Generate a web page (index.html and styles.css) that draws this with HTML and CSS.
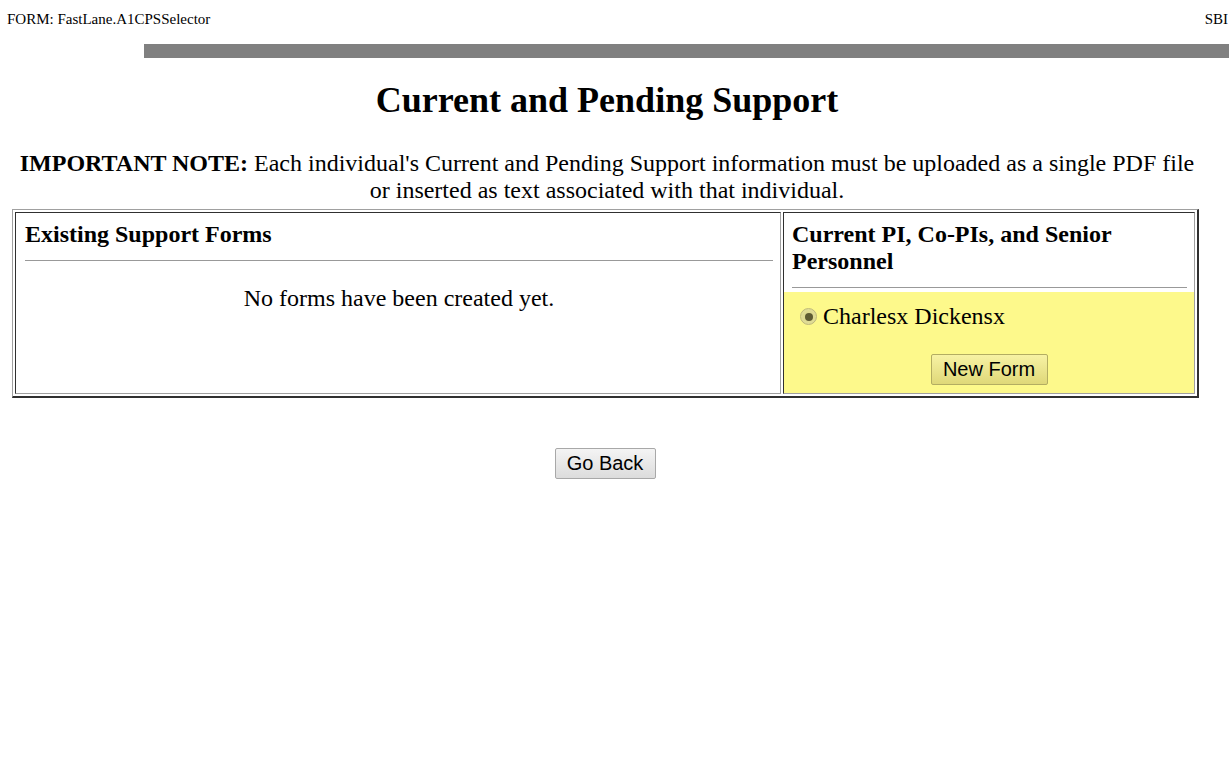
FILE: index.html
```html
<!DOCTYPE html>
<html>
<head>
<meta charset="utf-8">
<title>Current and Pending Support</title>
<link rel="stylesheet" href="styles.css">
</head>
<body>
<div class="topline">
  <span class="form-id">FORM: FastLane.A1CPSSelector</span>
  <span class="sbi">SBI</span>
</div>
<div class="graybar"></div>
<div class="page">
  <h1 class="title">Current and Pending Support</h1>
  <p class="note"><b>IMPORTANT NOTE:</b> Each individual's Current and Pending Support information must be uploaded as a single PDF file or inserted as text associated with that individual.</p>
  <table class="main">
    <tr>
      <td class="cell left">
        <div class="cell-head">Existing Support Forms</div>
        <hr class="rule">
        <div class="empty">No forms have been created yet.</div>
      </td>
      <td class="cell right">
        <div class="cell-head pad">Current PI, Co-PIs, and Senior Personnel</div>
        <hr class="rule pad-rule">
        <div class="yellow">
          <label class="person"><span class="radio"><span class="dot"></span></span>Charlesx Dickensx</label>
          <div class="btnrow"><button class="btn btn-yellow">New Form</button></div>
        </div>
      </td>
    </tr>
  </table>
  <div class="back"><button class="btn btn-gray">Go Back</button></div>
</div>
</body>
</html>
```
FILE: styles.css
```css
html, body {
  margin: 0;
  padding: 0;
  background: #fff;
  overflow: hidden;
}
body {
  font-family: "Liberation Serif", "Times New Roman", serif;
  color: #000;
  width: 1229px;
}
.topline {
  display: flex;
  justify-content: space-between;
  padding: 10px 1px 0 7px;
  height: 20px;
  font-size: 15px;
  line-height: 18px;
  box-sizing: border-box;
}
.graybar {
  margin: 24px 0 0 144px;
  height: 14px;
  background: #808080;
}
.page {
  width: 1198px;
  padding: 0 8px;
}
.title {
  text-align: center;
  font-size: 36px;
  line-height: 40px;
  margin: 22px 0 0;
  font-weight: bold;
}
.note {
  text-align: center;
  font-size: 24px;
  line-height: 27px;
  margin: 30px 0 0;
}
.main {
  margin: 5px 0 0 4px;
  width: 1187px;
  border-collapse: separate;
  border-spacing: 2px;
  border-style: solid;
  border-width: 1px 2px 2px 1px;
  border-color: #a0a0a0 #303030 #303030 #a0a0a0;
}
.cell {
  box-sizing: border-box;
  vertical-align: top;
  border: 1px solid;
  border-color: #303030 #a0a0a0 #a0a0a0 #303030;
}
.left {
  width: 766px;
  padding: 8px 7px 8px 9px;
}
.right {
  padding: 0;
}
.cell-head {
  font-size: 24px;
  line-height: 27px;
  font-weight: bold;
}
.pad {
  padding: 8px 8px 0 8px;
}
.rule {
  border: 0;
  border-top: 1px solid #999;
  height: 0;
  margin: 12px 0 0;
}
.pad-rule {
  margin: 12px 7px 0 8px;
}
.empty {
  text-align: center;
  font-size: 24px;
  line-height: 27px;
  margin-top: 24px;
}
.yellow {
  margin-top: 4px;
  background: #fdf98b;
  padding: 11px 8px 8px 8px;
}
.person {
  display: flex;
  align-items: center;
  font-size: 24px;
  line-height: 27px;
  padding-left: 8px;
}
.radio {
  width: 17px;
  height: 17px;
  border-radius: 50%;
  background: radial-gradient(circle, #d8d48a 0%, #e6e29c 100%);
  border: 1px solid #bdb87a;
  box-sizing: border-box;
  display: flex;
  align-items: center;
  justify-content: center;
  margin-right: 6px;
}
.dot {
  width: 8px;
  height: 8px;
  border-radius: 50%;
  background: #5e5b33;
}
.btnrow {
  text-align: center;
  margin-top: 24px;
  line-height: 0;
}
.btn {
  font-family: "Liberation Sans", Arial, sans-serif;
  font-size: 20px;
  height: 31px;
  padding: 0 10px;
  border-radius: 2px;
  color: #000;
  cursor: pointer;
  vertical-align: top;
}
.btn-yellow {
  width: 117px;
  border: 1px solid #b3ad62;
  background: linear-gradient(#f7f2a4, #dfd878);
}
.btn-gray {
  width: 101px;
  border: 1px solid #a8a8a8;
  background: linear-gradient(#f4f4f4, #dcdcdc);
}
.back {
  text-align: center;
  margin-top: 50px;
  padding-right: 4px;
  line-height: 0;
}
```
